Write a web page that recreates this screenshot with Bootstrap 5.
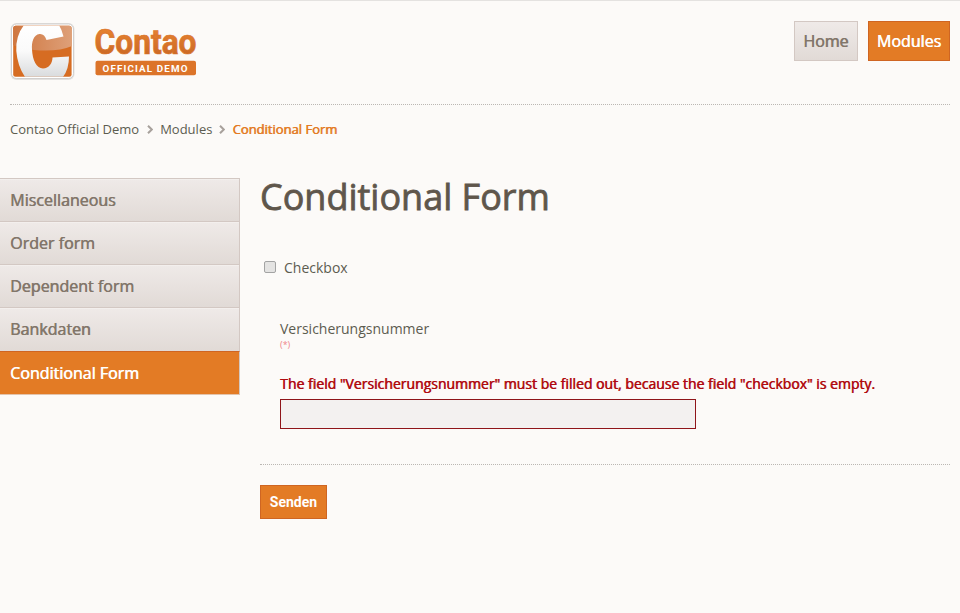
<!DOCTYPE html>
<html lang="en">
<head>
<meta charset="utf-8">
<meta name="viewport" content="width=device-width, initial-scale=1">
<title>Conditional Form - Contao Official Demo</title>
<link href="https://cdn.jsdelivr.net/npm/bootstrap@5.3.0/dist/css/bootstrap.min.css" rel="stylesheet">
<style>
body{background:#fcfaf8;color:#5c5c50;font:14px/20px "Open Sans",sans-serif;border-top:1px solid #e4e2e0;min-height:613px}
.faux{text-shadow:.6px 0 0 currentColor}
.site-head{height:104px;margin:0 10px;padding-top:20px;border-bottom:1px dotted #bbb7b3}
.site-logo{display:block;width:190px;height:72px;overflow:visible}
.main-nav{gap:10px}
.main-nav .nav-link{height:40px;padding:0 8px;font-size:16px;line-height:38px;border:1px solid #d3c8c3;border-radius:0;background:linear-gradient(#efeae8,#e1dad6);color:#82766a;text-align:center;min-width:64px}
.main-nav .nav-link.active{background:#e37b25;border-color:#cf6522;color:#fff}
.crumbs{margin:14px 10px 0;font-size:13px;height:20px}
.crumbs svg{width:6px;height:9px;margin:0 7px;fill:none;stroke:#a8a19c;stroke-width:2}
.crumbs svg:first-of-type{margin-left:8px}
.crumbs .current{color:#e37b25}
.side{width:240px;margin-top:39px}
.side .list-group-item{height:43px;padding:0 10px;font-size:16px;line-height:42px;border:0;border-top:1px solid #d3c8c3;border-right:1px solid #d3c8c3;box-shadow:inset 0 1px #f3efed;border-radius:0;background:linear-gradient(#efeae8,#e1dad6);color:#82766a}
.side .list-group-item:nth-child(4){height:44px}
.side .list-group-item.active{height:44px;margin:0;line-height:43px;background:#e37b25;border-top-color:#cf6522;border-bottom:1px solid #e3c3ab;box-shadow:none;color:#fff}
.content{width:690px;margin-left:20px;padding-top:36px}
.content h1{font-size:36px;line-height:44px;font-weight:400;margin:0;color:#5f564b;-webkit-text-stroke:.8px #5f564b}
.check-row{margin-top:39px}
.form-check-input.tick{width:12px;height:12px;margin:-2px 8px 0 4px;border:1px solid #a3a3a3;border-radius:2px;background-color:#e4e3e2}
.field-block{margin:41px 0 35px 20px}
.mandatory{font-size:9px;line-height:11px;color:#ef8589}
.error{margin:24px 0 5px;color:#b00b10;white-space:nowrap}
.form-control.field{width:416px;height:30px;border:1px solid #8f151a;border-radius:0;background:#f3f1f0}
.divider{border-top:1px dotted #bbb7b3}
.send{width:67px;height:34px;margin-top:20px;padding:0;border:1px solid #cf6522;border-radius:0;background:#e37b25;color:#fff;font:bold 14px/33px Roboto,sans-serif}
</style>
</head>
<body>
<header class="site-head d-flex justify-content-between">
  <a href="#" aria-label="Contao Official Demo" class="d-block">
  <svg class="site-logo" viewBox="10 21 190 72">
    <defs>
      <linearGradient id="shine" x1="0" y1="0" x2="1" y2="0"><stop offset="0" stop-color="#cf763f"/><stop offset="1" stop-color="#dea079"/></linearGradient>
      <linearGradient id="mark-fill" x1="0" y1="0" x2="0" y2="1"><stop offset="0" stop-color="#fff"/><stop offset=".5" stop-color="#fafafa"/><stop offset="1" stop-color="#d9dbdd"/></linearGradient>
      <linearGradient id="word" x1="0" y1="0" x2="0" y2="1"><stop offset=".2" stop-color="#e58130"/><stop offset=".85" stop-color="#c96724"/></linearGradient>
      <clipPath id="inner"><rect x="13.200" y="25.800" width="58.400" height="51" rx="2.500"/></clipPath>
    </defs>
    <rect x="10.500" y="23" width="64" height="57" rx="6" fill="#e3e1df"/>
    <rect x="11.500" y="24" width="62" height="54.500" rx="5" fill="#fff" stroke="#c9c7c5" stroke-width=".8"/>
    <g clip-path="url(#inner)">
      <rect x="13" y="25" width="59" height="52" fill="#d66c22"/>
      <path d="M13 25H72V46Q58 52 34 50Q21 49 13 45Z" fill="url(#shine)"/>
      <path d="M24 25H59Q62 30 63.500 36.500L46.500 40Q44.500 33.500 39.500 34C33.500 34.700 31.500 42 32 49.500C32.500 60 36.500 68.500 43 68.500C49 68.500 52.500 63 52.500 57.500L69 56.500Q69 69 63 77H25Q17.500 66 16.300 51Q15.500 36 24 25Z" fill="url(#mark-fill)"/>
    </g>
    <text x="94.500" y="54" textLength="102" lengthAdjust="spacingAndGlyphs" font-family="Roboto,sans-serif" font-weight="700" font-size="35" fill="url(#word)" stroke="#d9732a" stroke-width=".7">Contao</text>
    <rect x="95.500" y="60.800" width="100.500" height="14.400" rx="2" fill="#dc7429"/>
    <text x="102.500" y="71.600" textLength="85" font-family="Roboto,sans-serif" font-weight="700" font-size="9.800" fill="#fff">OFFICIAL DEMO</text>
  </svg></a>
  <nav class="nav main-nav faux">
    <a class="nav-link" href="#">Home</a>
    <a class="nav-link active" href="#">Modules</a>
  </nav>
</header>
<nav class="crumbs d-flex align-items-center" aria-label="Breadcrumb">
  <span>Contao Official Demo</span><svg viewBox="0 0 6 9"><path d="M1 .7L4.800 4.500L1 8.300"/></svg>
  <span>Modules</span><svg viewBox="0 0 6 9"><path d="M1 .7L4.800 4.500L1 8.300"/></svg>
  <span class="current faux">Conditional Form</span>
</nav>
<div class="d-flex align-items-start">
  <aside class="side list-group rounded-0 faux flex-shrink-0">
    <a class="list-group-item" href="#">Miscellaneous</a>
    <a class="list-group-item" href="#">Order form</a>
    <a class="list-group-item" href="#">Dependent form</a>
    <a class="list-group-item" href="#">Bankdaten</a>
    <a class="list-group-item active" href="#">Conditional Form</a>
  </aside>
  <main class="content">
    <h1>Conditional Form</h1>
    <form>
      <label class="d-flex align-items-center check-row"><input type="checkbox" class="form-check-input tick"><span>Checkbox</span></label>
      <div class="field-block">
        <label for="vnr" class="d-block">Versicherungsnummer</label>
        <div class="mandatory">(*)</div>
        <div class="error faux">The field "Versicherungsnummer" must be filled out, because the field "checkbox" is empty.</div>
        <input id="vnr" type="text" class="form-control field">
      </div>
      <div class="divider"></div>
      <button type="button" class="btn send">Senden</button>
    </form>
  </main>
</div>
</body>
</html>
